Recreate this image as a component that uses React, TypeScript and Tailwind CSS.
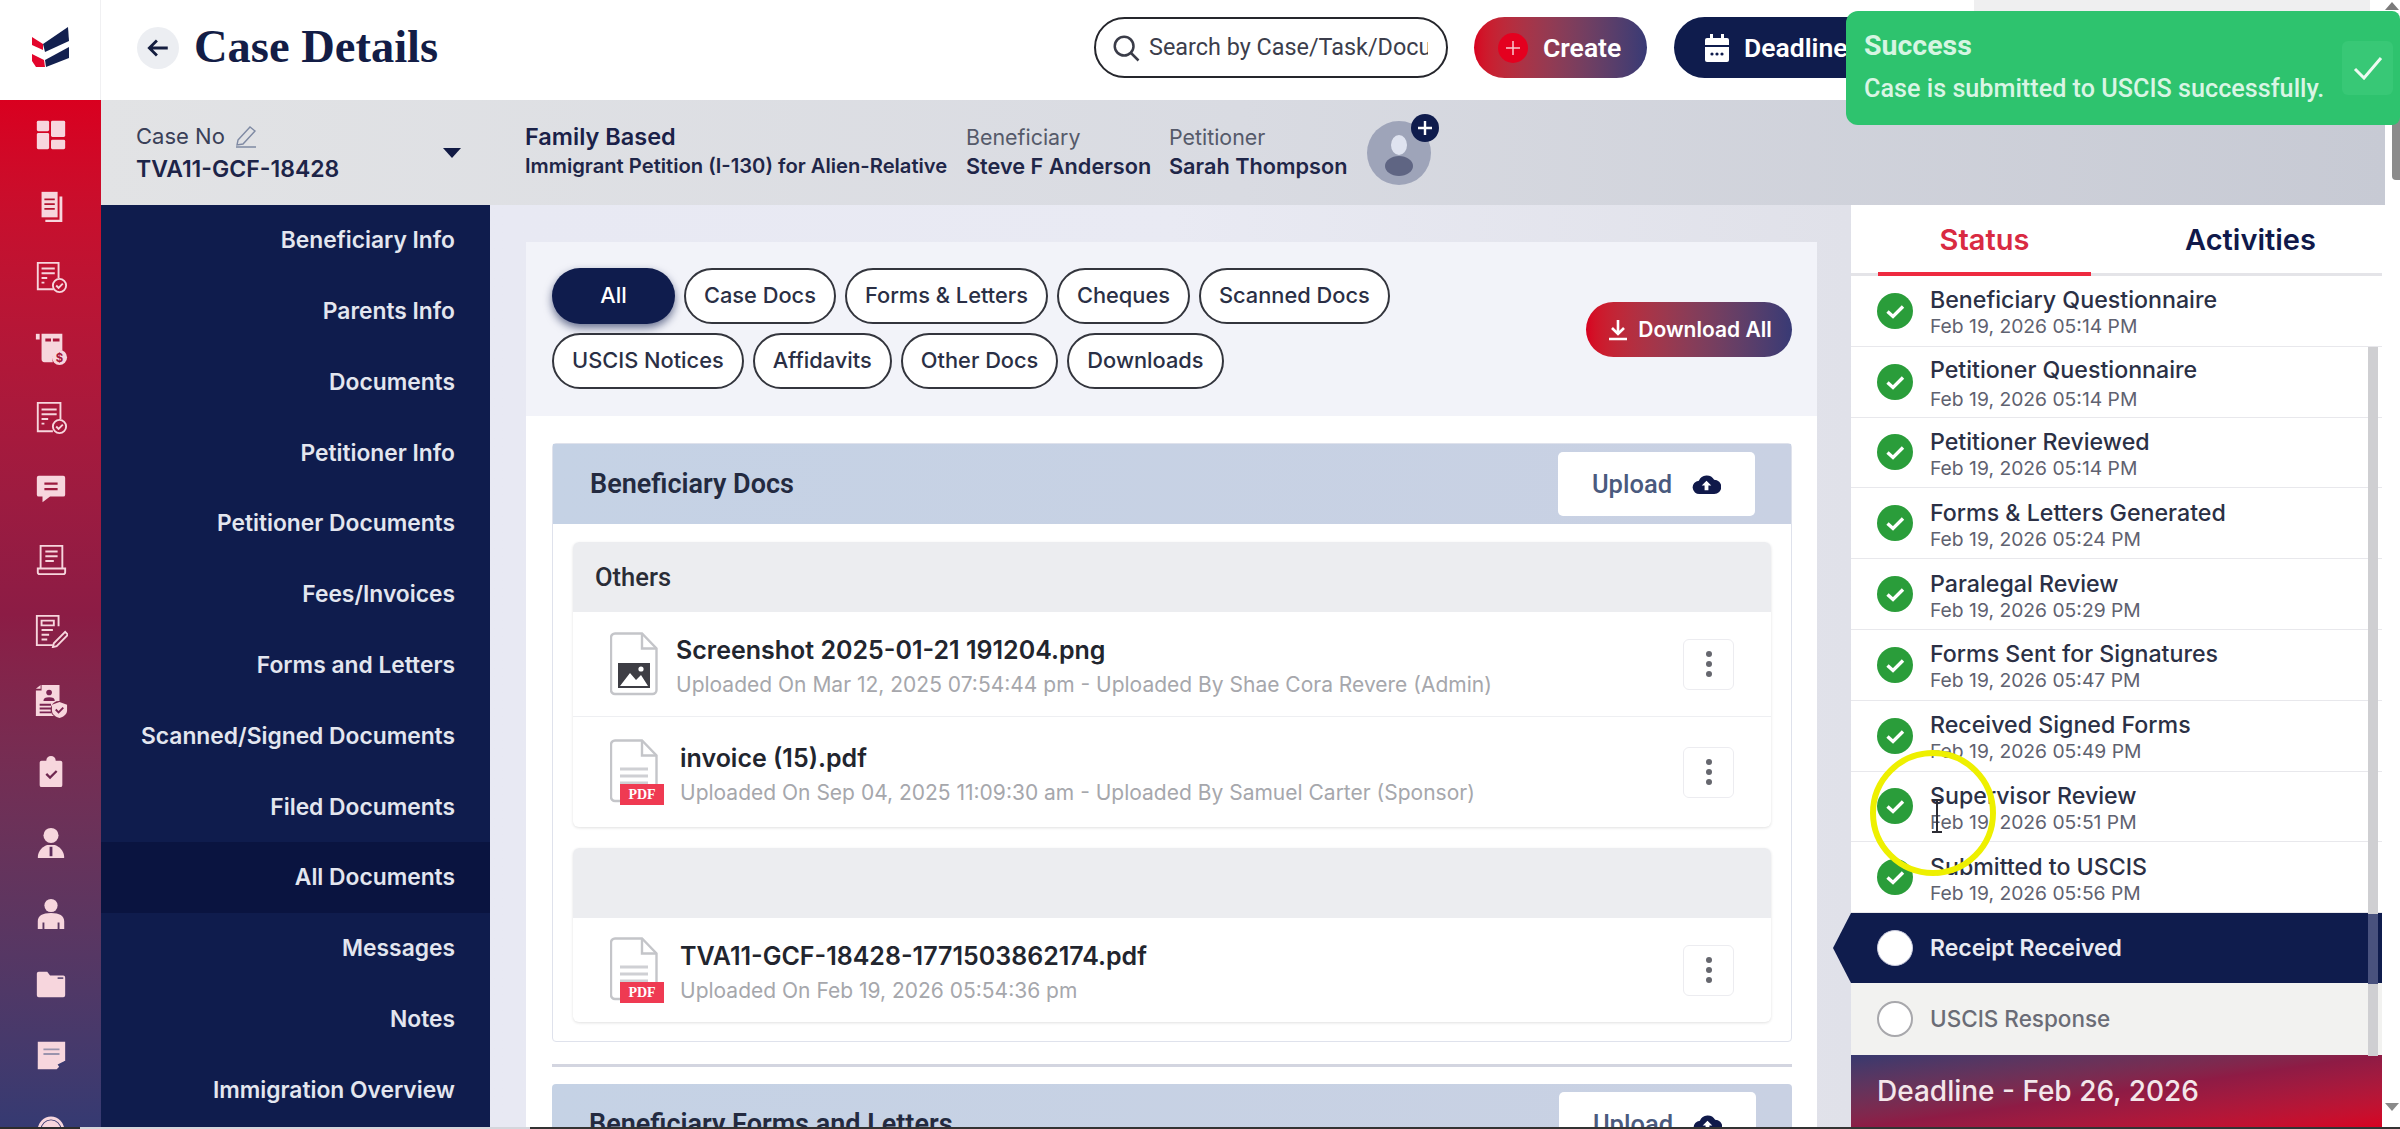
import React from "react";

const NAVY = "#0f1c4d";

function Rail({ children }: { children: React.ReactNode }) {
  return (
    <div className="h-[70.75px] shrink-0 flex items-center justify-center">
      <svg viewBox="0 0 36 36" className="w-[34px] h-[34px]" fill="#f7d6dd" stroke="none">
        {children}
      </svg>
    </div>
  );
}

const railIcons: React.ReactNode[] = [
  <g key="a">
    <rect x="3" y="3" width="13" height="11" rx="1.5" />
    <rect x="3" y="16" width="13" height="17" rx="1.5" />
    <rect x="18" y="3" width="15" height="17" rx="1.5" />
    <rect x="18" y="23" width="15" height="10" rx="1.5" />
  </g>,
  <g key="b">
    <path d="M8 3h17v27H8z" />
    <path d="M27 8h3v27H12v-2.5h15z" />
    <path d="M11 10h11v2H11zM11 15h11v2H11zM11 20h11v2H11z" fill="#b3122f" />
  </g>,
  <g key="c" fill="none" stroke="#f7d6dd" strokeWidth="2">
    <path d="M21 31H4V3h22v16" />
    <path d="M8 9h14M8 14h14M8 19h6M8 24h3" />
    <circle cx="27" cy="27" r="7" />
    <path d="M23.5 27l2.5 2.5 4.5-4.5" />
  </g>,
  <g key="d">
    <path d="M2 3h4v6H2z" />
    <path d="M8 3h22v18a9 9 0 0 0-10 12H11a3 3 0 0 1-3-3z" />
    <path d="M12 8h6v3h-6zM20 8h7v3h-7z" fill="#a8163a" />
    <circle cx="27" cy="28" r="8" />
    <text x="27" y="32.5" textAnchor="middle" fontSize="12" fontWeight="700" fill="#a8163a" fontFamily="Inter">$</text>
  </g>,
  <g key="e" fill="none" stroke="#f7d6dd" strokeWidth="2">
    <path d="M20 32H4V2h24v17" />
    <path d="M8 9h16M8 14h16M8 19h7M8 24h3" />
    <circle cx="27" cy="27" r="7" />
    <path d="M23.5 27l2.5 2.5 4.5-4.5" />
  </g>,
  <g key="f">
    <path d="M5 4h26a2 2 0 0 1 2 2v18a2 2 0 0 1-2 2H17l-8 6v-6H5a2 2 0 0 1-2-2V6a2 2 0 0 1 2-2z" />
    <path d="M11 11h14v2.4H11zM11 17h14v2.4H11z" fill="#9c1a3e" />
  </g>,
  <g key="g" fill="none" stroke="#f7d6dd" strokeWidth="2">
    <path d="M7 27V3h23v24" />
    <path d="M12 9h13M12 14h13M12 19h9" />
    <path d="M4 27h29v4a2 2 0 0 1-2 2H6a2 2 0 0 1-2-2z" />
  </g>,
  <g key="h" fill="none" stroke="#f7d6dd" strokeWidth="2">
    <path d="M26 13V2H3v31h17" />
    <path d="M8 7h13v5H8zM8 17h12M8 22h8M8 27h6" />
    <path d="M21 31l-1 4 4-1 12-12-3-3z" />
  </g>,
  <g key="i">
    <path d="M8 1h19v17a9 9 0 0 0-6 16H2V7h6z" />
    <path d="M2 5l5-4v4z" />
    <circle cx="16" cy="9" r="3" fill="#7a2352" />
    <path d="M10 18c0-3 2-4 6-4s6 1 6 4z" fill="#7a2352" />
    <path d="M6 21h12v2H6zM6 25h12v2H6zM6 29h12v2H6z" fill="#7a2352" />
    <path d="M27 19l8 3v6c0 4-4 7-8 8-4-1-8-4-8-8v-6z" />
    <path d="M23 27l3 3 5-5" fill="none" stroke="#7a2352" strokeWidth="2" />
  </g>,
  <g key="j">
    <path d="M8 6h5a5 5 0 0 1 10 0h5a2 2 0 0 1 2 2v24a2 2 0 0 1-2 2H8a2 2 0 0 1-2-2V8a2 2 0 0 1 2-2z" />
    <path d="M13 20l4 4 7-7" fill="none" stroke="#6e274f" strokeWidth="2.4" />
  </g>,
  <g key="k">
    <circle cx="18" cy="10" r="8" />
    <path d="M4 33c0-7 6-12 10-13h8c4 1 10 6 10 13a1 1 0 0 1-1 1H5a1 1 0 0 1-1-1z" />
    <path d="M16.5 22h3v10h-3z" fill="#5d2c5b" />
  </g>,
  <g key="l">
    <circle cx="18" cy="9" r="7" />
    <path d="M4 34v-8c0-6 5-9 14-9s14 3 14 9v8h-5v-7h-2v7H11v-7H9v7z" />
  </g>,
  <g key="m">
    <path d="M3 7a2 2 0 0 1 2-2h9l3 4h14a2 2 0 0 1 2 2v19a2 2 0 0 1-2 2H5a2 2 0 0 1-2-2z" />
    <path d="M25 11h6v1.5h-6z" fill="#443565" />
  </g>,
  <g key="n">
    <path d="M4 4h29v20l-9 9H4z" />
    <path d="M10 11h17v2H10zM10 16h17v2H10z" fill="#9a93ad" />
    <path d="M25 28l8-4v2l-6 5z" fill="#3b3a70" />
  </g>,
  <g key="o">
    <path d="M4 22a14 14 0 0 1 28 0v8h-3v-8a11 11 0 0 0-22 0v8H4z" />
    <circle cx="18" cy="22" r="10" />
  </g>,
];

const navItems = [
  "Beneficiary Info", "Parents Info", "Documents", "Petitioner Info", "Petitioner Documents",
  "Fees/Invoices", "Forms and Letters", "Scanned/Signed Documents", "Filed Documents",
  "All Documents", "Messages", "Notes", "Immigration Overview",
];

const chipRows = [
  ["All", "Case Docs", "Forms & Letters", "Cheques", "Scanned Docs"],
  ["USCIS Notices", "Affidavits", "Other Docs", "Downloads"],
];

const statuses = [
  ["Beneficiary Questionnaire", "Feb 19, 2026 05:14 PM"],
  ["Petitioner Questionnaire", "Feb 19, 2026 05:14 PM"],
  ["Petitioner Reviewed", "Feb 19, 2026 05:14 PM"],
  ["Forms & Letters Generated", "Feb 19, 2026 05:24 PM"],
  ["Paralegal Review", "Feb 19, 2026 05:29 PM"],
  ["Forms Sent for Signatures", "Feb 19, 2026 05:47 PM"],
  ["Received Signed Forms", "Feb 19, 2026 05:49 PM"],
  ["Supervisor Review", "Feb 19, 2026 05:51 PM"],
  ["Submitted to USCIS", "Feb 19, 2026 05:56 PM"],
];

function Kebab() {
  return (
    <div className="w-[51px] h-[51px] shrink-0 rounded-[6px] border border-[#ececf0] bg-white flex flex-col items-center justify-center gap-[4px]">
      <span className="w-[6px] h-[6px] rounded-full bg-[#66676e]" />
      <span className="w-[6px] h-[6px] rounded-full bg-[#66676e]" />
      <span className="w-[6px] h-[6px] rounded-full bg-[#66676e]" />
    </div>
  );
}

function PageOutline({ children }: { children?: React.ReactNode }) {
  return (
    <svg viewBox="0 0 48 64" className="w-[48px] h-[64px]" fill="none">
      <path d="M5 1.5h27l14.5 15V58a4 4 0 0 1-4 4H5a4 4 0 0 1-4-4V5.5a4 4 0 0 1 4-4z" fill="#fff" stroke="#c4c5c9" strokeWidth="2.4" />
      <path d="M32 1.5V16.5h14.5" stroke="#c4c5c9" strokeWidth="2.4" />
      {children}
    </svg>
  );
}

function ImageFile() {
  return (
    <div className="w-[48px] shrink-0">
      <PageOutline>
        <rect x="8" y="31" width="32" height="25" fill="#3d3d44" />
        <path d="M10 54l10-13 6 7 5-5 7 11z" fill="#fff" />
        <circle cx="31" cy="37" r="2.6" fill="#fff" />
      </PageOutline>
    </div>
  );
}

function PdfFile() {
  return (
    <div className="relative w-[54px] h-[66px] shrink-0">
      <PageOutline>
        <path d="M10 30h28M10 37h28M10 44h28" stroke="#cfd0d4" strokeWidth="3" />
      </PageOutline>
      <span className="absolute left-[10px] top-[45px] w-[44px] h-[21px] bg-[#ef3a52] text-white text-[14px] leading-[21px] text-center font-['Liberation_Serif',serif] font-bold">
        PDF
      </span>
    </div>
  );
}

function DocRow({ icon, title, sub, height, gap }: { icon: React.ReactNode; title: string; sub: string; height: string; gap: string }) {
  return (
    <div className={`flex items-center px-[37px] ${height}`}>
      {icon}
      <div className={`flex-1 pt-[5px] ${gap}`}>
        <div className="text-[25px] leading-[30px] font-semibold text-[#22252e] font-['Inter',sans-serif]">{title}</div>
        <div className="text-[21px] leading-[28px] mt-[6px] text-[#a6a7ac]">{sub}</div>
      </div>
      <Kebab />
    </div>
  );
}

function CheckCircle() {
  return (
    <svg viewBox="0 0 36 36" className="w-[36px] h-[36px] shrink-0">
      <circle cx="18" cy="18" r="18" fill="#2a9d3a" />
      <path d="M10.5 18.5l5.5 5 10-10" fill="none" stroke="#fff" strokeWidth="3.4" />
    </svg>
  );
}

function UploadButton() {
  return (
    <span className="w-[197px] h-[64px] rounded-[5px] bg-white flex items-center justify-center gap-[20px] text-[25.5px] font-medium text-[#4a5a7e] font-['Roboto',sans-serif]">
      Upload
      <svg viewBox="0 0 30 22" className="w-[29px] h-[21px]">
        <path d="M8 21a7 7 0 0 1-1-14 9 9 0 0 1 16-1 7.5 7.5 0 0 1 0 15z" fill="#10194a" />
        <path d="M15 7l5 5h-3v5h-4v-5h-3z" fill="#fff" />
      </svg>
    </span>
  );
}

export default function App() {
  return (
    <div className="relative w-[2400px] h-[1129px] overflow-hidden bg-white flex flex-col font-['Inter',sans-serif]">
      {/* Header */}
      <header className="h-[100px] shrink-0 flex bg-white">
        <div className="w-[101px] shrink-0 border-r border-[#f0f0f2] flex items-center justify-center">
          <svg viewBox="0 0 37 40" className="w-[37px] h-[40px] mb-[6px]">
            <path d="M11 17L36 0l1 14-24 11z" fill="#13204f" />
            <path d="M0 10l11 7v6L0 18z" fill="#e3062c" />
            <path d="M13 33l24-13v11l-23 9z" fill="#13204f" />
            <path d="M0 27l12 6 1 7H4l-4-6z" fill="#e3062c" />
          </svg>
        </div>
        <div className="flex-1 flex items-center pl-[36px]">
          <div className="w-[42px] h-[42px] mb-[5px] rounded-full bg-[#eceef2] flex items-center justify-center">
            <svg viewBox="0 0 24 24" className="w-[26px] h-[26px]" fill="none" stroke="#141d3f" strokeWidth="2.6">
              <path d="M21 12H5M11 5l-7 7 7 7" />
            </svg>
          </div>
          <h1 className="ml-[15px] mb-[5px] w-[900px] text-[46.5px] leading-none font-bold text-[#131d46] font-['Liberation_Serif',serif]">Case Details</h1>
          <div className="w-[354px] h-[61px] mb-[5px] border-2 border-[#25262c] rounded-full bg-white flex items-center pl-[15px] pr-[18px] shrink-0">
            <svg viewBox="0 0 24 24" className="w-[30px] h-[30px] shrink-0" fill="none" stroke="#3a3c48" strokeWidth="2">
              <circle cx="10.5" cy="10.5" r="7.5" />
              <path d="M16 16l6 6" />
            </svg>
            <span className="ml-[8px] overflow-hidden whitespace-nowrap text-[23.4px] text-[#3c3e4c] font-['Roboto',sans-serif]">Search by Case/Task/Document</span>
          </div>
          <div className="ml-[26px] w-[173px] h-[61px] mb-[5px] rounded-full bg-gradient-to-r from-[#d8001f] to-[#383a75] flex items-center pl-[24px] shrink-0">
            <span className="w-[30px] h-[30px] rounded-full bg-[#e4001f] flex items-center justify-center">
              <svg viewBox="0 0 16 16" className="w-[16px] h-[16px]" stroke="#f9c9d0" strokeWidth="1.5"><path d="M8 1v14M1 8h14" /></svg>
            </span>
            <span className="ml-[15px] text-[26.5px] font-semibold text-white font-['Roboto',sans-serif]">Create</span>
          </div>
          <div className="ml-[27px] w-[300px] h-[61px] mb-[5px] rounded-l-full bg-[#0f1c4d] flex items-center pl-[29px] shrink-0">
            <svg viewBox="0 0 28 30" className="w-[28px] h-[30px]">
              <path d="M2 7a2 2 0 0 1 2-2h3V1h3v4h8V1h3v4h3a2 2 0 0 1 2 2v5H2z" fill="#fff" />
              <path d="M2 14h24v13a2 2 0 0 1-2 2H4a2 2 0 0 1-2-2z" fill="#fff" />
              <circle cx="9" cy="21" r="1.6" fill={NAVY} />
              <circle cx="14" cy="21" r="1.6" fill={NAVY} />
              <circle cx="19" cy="21" r="1.6" fill={NAVY} />
            </svg>
            <span className="ml-[13px] text-[26.5px] font-semibold text-white font-['Roboto',sans-serif]">Deadline</span>
          </div>
          <div className="self-stretch w-[396px] shrink-0 bg-[#efeff0]" />
        </div>
      </header>

      <div className="flex-1 flex min-h-0">
        {/* Icon rail */}
        <aside className="w-[101px] shrink-0 bg-gradient-to-b from-[#d9001f] via-[#8c1c45] to-[#353a72] flex flex-col overflow-hidden">
          {railIcons.map((icon, i) => (
            <Rail key={i}>{icon}</Rail>
          ))}
        </aside>

        <div className="flex-1 min-w-0 flex flex-col">
          {/* Case strip */}
          <div className="h-[105px] shrink-0 w-[2284px] flex items-center bg-gradient-to-r from-[#e2e3e5] via-[#d9dbe2] to-[#c7cad4]">
            <div className="w-[389px] pl-[35px] pr-[29px] flex items-center justify-between">
              <div className="mb-[1px]">
                <div className="flex items-center gap-[9px] text-[22px] leading-[30px] text-[#3a4058]">
                  Case No
                  <svg viewBox="0 0 24 24" className="w-[24px] h-[24px]" fill="none" stroke="#7f8aa3" strokeWidth="1.4">
                    <path d="M4 16L16 3l5 4L9 20l-6 1zM2 23h20" />
                  </svg>
                </div>
                <div className="mt-[3px] text-[23px] leading-[30px] font-semibold text-[#1d2448]">TVA11-GCF-18428</div>
              </div>
              <span className="w-0 h-0 border-x-[9px] border-x-transparent border-t-[10px] border-t-[#111a44]" />
            </div>
            <div className="pl-[35px] w-[476px] mb-[3px]">
              <div className="text-[23.5px] leading-[30px] font-semibold text-[#1a2148]">Family Based</div>
              <div className="text-[20.2px] leading-[28px] font-semibold text-[#1f2648] whitespace-nowrap">Immigrant Petition (I-130) for Alien-Relative</div>
            </div>
            <div className="w-[203px] mb-[3px]">
              <div className="text-[21.4px] leading-[30px] text-[#555a6a]">Beneficiary</div>
              <div className="text-[21.7px] leading-[28px] font-semibold text-[#1f2648] whitespace-nowrap">Steve F Anderson</div>
            </div>
            <div className="w-[198px] mb-[3px]">
              <div className="text-[21.4px] leading-[30px] text-[#555a6a]">Petitioner</div>
              <div className="text-[21.7px] leading-[28px] font-semibold text-[#1f2648] whitespace-nowrap">Sarah Thompson</div>
            </div>
            <div className="relative w-[64px] h-[64px] rounded-full bg-[#9ea4b9]">
              <svg viewBox="0 0 64 64" className="w-[64px] h-[64px]">
                <ellipse cx="32" cy="24" rx="8" ry="10" fill="#dfe3f0" />
                <ellipse cx="32" cy="45" rx="14" ry="10" fill="#5f6583" />
              </svg>
              <span className="absolute right-[-8px] top-[-7px] w-[28px] h-[28px] rounded-full bg-[#0f1c4d] flex items-center justify-center">
                <svg viewBox="0 0 16 16" className="w-[16px] h-[16px]" stroke="#fff" strokeWidth="2.4"><path d="M8 1v14M1 8h14" /></svg>
              </span>
            </div>
          </div>

          <div className="flex-1 min-h-0 flex">
            {/* Sub nav */}
            <nav className="w-[389px] shrink-0 bg-[#0f1c4d] flex flex-col overflow-hidden">
              {navItems.map((item) => (
                <div
                  key={item}
                  className={`h-[70.8px] shrink-0 flex items-center justify-end pr-[35px] text-[22.8px] font-semibold text-[#e3e6ef] whitespace-nowrap ${item === "All Documents" ? "bg-[#0a1440]" : ""}`}
                >
                  {item}
                </div>
              ))}
            </nav>

            {/* Main */}
            <main className="w-[1361px] shrink-0 bg-gradient-to-r from-[#e8e9f3] via-[#e9eaf3] to-[#e0e1e9] pt-[37px] pl-[36px] pr-[34px] overflow-hidden">
              <div className="h-[174px] bg-[#f2f3f9] pl-[26px] pr-[25px] pt-[26px] flex justify-between">
                <div className="flex flex-col gap-[9px]">
                  {chipRows.map((row, r) => (
                    <div key={r} className="flex gap-[9px]">
                      {row.map((chip) => (
                        <span
                          key={chip}
                          className={`h-[56px] pb-[2px] rounded-full flex items-center text-[21.8px] font-medium ${
                            chip === "All"
                              ? "w-[123px] justify-center bg-[#0f1c4d] text-white shadow-[0_4px_8px_rgba(15,28,77,0.6)]"
                              : "px-[18px] bg-white text-[#2a2f45] border-2 border-[#33353d]"
                          }`}
                        >
                          {chip}
                        </span>
                      ))}
                    </div>
                  ))}
                </div>
                <div className="mt-[34px] w-[206px] h-[55px] rounded-full bg-gradient-to-r from-[#d8001f] to-[#383a75] flex items-center justify-center gap-[8px] text-white text-[21px] font-semibold">
                  <svg viewBox="0 0 24 24" className="w-[24px] h-[24px]" fill="none" stroke="#fff" strokeWidth="2.6">
                    <path d="M12 2v13M6 10l6 6 6-6M3 21h18" />
                  </svg>
                  Download All
                </div>
              </div>

              <div className="bg-white pl-[26px] pr-[25px] pt-[27px] pb-[60px]">
                {/* Beneficiary Docs */}
                <section className="border border-[#dfe2ec] rounded-[4px]">
                  <div className="h-[80px] bg-gradient-to-r from-[#c5d2e5] to-[#c9d1e3] flex items-center justify-between pl-[37px] pr-[36px]">
                    <span className="text-[27px] font-semibold text-[#232a40] font-['Roboto',sans-serif]">Beneficiary Docs</span>
                    <UploadButton />
                  </div>
                  <div className="px-[20px] pt-[18px] pb-[19px] flex flex-col gap-[21px]">
                    <div className="rounded-[6px] shadow-[0_1px_3px_rgba(0,0,0,0.12)] overflow-hidden">
                      <div className="h-[70px] bg-[#ecedf0] flex items-center pl-[22px] text-[25.5px] font-medium text-[#2a2c36] font-['Roboto',sans-serif]">Others</div>
                      <div className="border-b border-[#eeeff2]">
                        <DocRow height="h-[104px]" icon={<ImageFile />} gap="ml-[18px]" title="Screenshot 2025-01-21 191204.png" sub="Uploaded On Mar 12, 2025 07:54:44 pm - Uploaded By Shae Cora Revere (Admin)" />
                      </div>
                      <DocRow height="h-[110px]" icon={<PdfFile />} gap="ml-[16px]" title="invoice (15).pdf" sub="Uploaded On Sep 04, 2025 11:09:30 am - Uploaded By Samuel Carter (Sponsor)" />
                    </div>
                    <div className="rounded-[6px] shadow-[0_1px_3px_rgba(0,0,0,0.12)] overflow-hidden">
                      <div className="h-[70px] bg-[#ecedf0]" />
                      <DocRow height="h-[104px]" icon={<PdfFile />} gap="ml-[16px]" title="TVA11-GCF-18428-1771503862174.pdf" sub="Uploaded On Feb 19, 2026 05:54:36 pm" />
                    </div>
                  </div>
                </section>
                <div className="mt-[22px] h-[3px] bg-[#d3d5e0]" />
                {/* Forms and letters */}
                <section className="mt-[17px] h-[80px] rounded-t-[4px] bg-gradient-to-r from-[#c5d2e5] to-[#c9d1e3] flex items-center justify-between pl-[37px] pr-[36px]">
                  <span className="text-[27px] font-semibold text-[#232a40] font-['Roboto',sans-serif]">Beneficiary Forms and Letters</span>
                  <UploadButton />
                </section>
              </div>
            </main>

            {/* Status panel */}
            <section className="relative w-[531px] shrink-0 bg-white flex flex-col">
              <div className="h-[71px] shrink-0 border-b-[3px] border-[#e4e4e8] flex">
                <div className="ml-[27px] w-[213px] h-[71px] pt-[2px] border-b-[4px] border-[#ee2a40] flex items-center justify-center text-[29px] font-semibold text-[#d92a42]">Status</div>
                <div className="flex-1 flex items-center justify-center pt-[2px] pl-[28px] text-[29px] font-semibold text-[#10194a]">Activities</div>
              </div>
              <div className="flex flex-col">
                {statuses.map(([title, date], i) => (
                  <div key={title} className="h-[70.8px] shrink-0 border-b border-[#e8e8ec] flex items-center pl-[26px]">
                    <CheckCircle />
                    <div className="ml-[17px] pt-[5px]">
                      <div className="text-[23.2px] leading-[25px] font-medium text-[#2b3045]">{title}</div>
                      <div className={`text-[19.3px] leading-[24px] text-[#5f6270] ${i === 1 ? "mt-[4px]" : "mt-[1px]"}`}>{date}</div>
                    </div>
                  </div>
                ))}
                <div className="relative h-[70px] shrink-0 bg-[#0f1c4d] flex items-center pl-[26px]">
                  <span className="absolute left-[-18px] top-0 w-0 h-0 border-y-[35px] border-y-transparent border-r-[18px] border-r-[#0f1c4d]" />
                  <span className="w-[36px] h-[36px] rounded-full bg-white border border-[#c7c9dc]" />
                  <span className="ml-[17px] text-[23px] font-semibold text-[#e8eaf2]">Receipt Received</span>
                </div>
                <div className="h-[72px] shrink-0 bg-[#f2f2f0] flex items-center pl-[26px]">
                  <span className="w-[36px] h-[36px] rounded-full bg-white border-2 border-[#a8a8ac]" />
                  <span className="ml-[17px] text-[22.5px] font-medium text-[#6a6c76]">USCIS Response</span>
                </div>
              </div>
              <div className="flex-1 pb-[2px] bg-gradient-to-br from-[#37396f] via-[#8e1b45] to-[#d9001f] flex items-center pl-[26px] text-[28px] font-medium text-[#f3e6ea]">
                Deadline - Feb 26, 2026
              </div>
              {/* Inner scrollbar */}
              <div className="absolute left-[517px] top-[142px] w-[10px] h-[709px] bg-[#cfcfd2]" />
              <div className="absolute left-[517px] top-[709px] w-[10px] h-[70px] bg-[#49527e]" />
            </section>

            <div className="flex-1 bg-white" />
          </div>
        </div>
      </div>

      {/* Page scrollbar */}
      <div className="absolute right-0 top-[100px] w-[8px] h-[80px] rounded-l-[4px] bg-[#8b8b8b]" />
      <span className="absolute right-[1px] top-[2px] w-0 h-0 border-x-[7px] border-x-transparent border-b-[8px] border-b-[#7a7a7a]" />
      <span className="absolute right-[1px] bottom-[18px] w-0 h-0 border-x-[7px] border-x-transparent border-t-[8px] border-t-[#8a8a8a]" />

      {/* Toast */}
      <div className="absolute left-[1846px] top-[11px] w-[554px] h-[114px] rounded-l-[12px] rounded-r-[8px] bg-[#2ec36e] flex items-center pl-[18px] font-['Roboto',sans-serif]">
        <div className="flex-1">
          <div className="text-[28.5px] leading-[36px] font-bold text-[#d6f5e2] mt-[-1px]">Success</div>
          <div className="mt-[7px] text-[25.2px] leading-[36px] font-medium text-[#d9f5e4] whitespace-nowrap">Case is submitted to USCIS successfully.</div>
        </div>
        <div className="mr-[7px] w-[51px] h-[54px] rounded-[6px] bg-[#38c876] flex items-center justify-center">
          <svg viewBox="0 0 30 24" className="w-[30px] h-[24px]" fill="none" stroke="#eefaf2" strokeWidth="3">
            <path d="M2 13l9 9L28 2" />
          </svg>
        </div>
      </div>

      {/* Recording cursor highlight */}
      <div className="absolute left-[1870px] top-[750px] w-[126px] h-[126px] rounded-full border-[6px] border-[#eef000]" />
      <svg viewBox="0 0 14 34" className="absolute left-[1930px] top-[799px] w-[14px] h-[34px]" fill="none" stroke="#2c2c34" strokeWidth="2">
        <path d="M2 1h10M7 1v32M2 33h10" />
      </svg>

      {/* Bottom edge */}
      <div className="absolute left-0 bottom-0 w-full h-[2px] flex">
        <div className="w-[80px] bg-[#2c2c2c]" />
        <div className="w-[450px] bg-[#d4d6dc]" />
        <div className="flex-1 bg-[#333333]" />
      </div>
    </div>
  );
}
